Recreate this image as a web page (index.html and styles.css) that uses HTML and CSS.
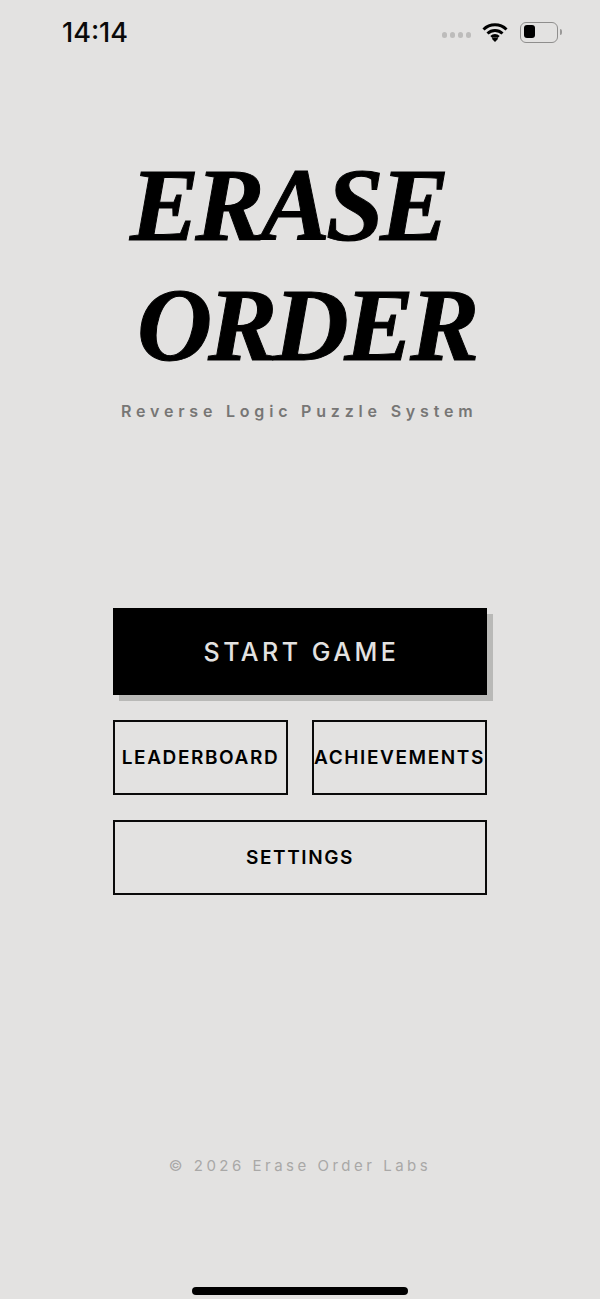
FILE: index.html
```html
<!DOCTYPE html>
<html lang="en">
<head>
    <meta charset="UTF-8">
    <meta name="viewport" content="width=device-width, initial-scale=1.0">
    <title>Erase Order</title>
    <link rel="stylesheet" href="styles.css">
</head>
<body>
    <main class="screen">
        <header class="status-bar">
            <span class="status-time">14:14</span>
            <div class="status-icons">
                <div class="signal-dots">
                    <span></span><span></span><span></span><span></span>
                </div>
                <svg class="icon-wifi" width="26" height="20" viewBox="0 0 26 20">
                    <path d="M1.5 7.5 A16.5 16.5 0 0 1 24.5 7.5 M5.5 11.5 A11 11 0 0 1 20.500 11.500 M9.300 15 A5.500 5.500 0 0 1 16.700 15" fill="none" stroke="#000" stroke-width="3"/>
                    <path d="M13 20 L9.800 16.700 A4.500 4.500 0 0 1 16.200 16.700 Z" fill="#000"/>
                </svg>
                <div class="battery">
                    <div class="battery-body"><span class="battery-level"></span></div>
                    <span class="battery-cap"></span>
                </div>
            </div>
        </header>

        <section class="hero">
            <h1 class="title">
                <span class="title-first">ERASE</span>
                <span class="title-second">ORDER</span>
            </h1>
            <p class="subtitle">Reverse Logic Puzzle System</p>
        </section>

        <nav class="menu">
            <button type="button" class="btn btn-start">START GAME</button>
            <div class="menu-row">
                <button type="button" class="btn btn-line">LEADERBOARD</button>
                <button type="button" class="btn btn-line">ACHIEVEMENTS</button>
            </div>
            <button type="button" class="btn btn-line">SETTINGS</button>
        </nav>

        <footer class="copyright">© 2026 Erase Order Labs</footer>
        <div class="home-bar"></div>
    </main>
</body>
</html>
```

FILE: styles.css
```css
* {
    box-sizing: border-box;
}

html,
body {
    margin: 0;
    padding: 0;
}

body {
    background: #e3e2e1;
    color: #000;
    font-family: "Inter", "Liberation Sans", sans-serif;
}

.screen {
    display: flex;
    flex-direction: column;
    height: 1299px;
    overflow: hidden;
}

.status-bar {
    display: flex;
    justify-content: space-between;
    align-items: center;
    height: 64px;
    padding: 0 38px 0 62px;
}

.status-time {
    font-size: 27px;
    font-weight: 500;
    color: #0a0a0a;
}

.status-icons {
    display: flex;
    align-items: center;
}

.signal-dots {
    display: flex;
    gap: 2.5px;
    margin-right: 11px;
    margin-top: 6px;
}

.signal-dots span {
    width: 5.5px;
    height: 5.5px;
    border-radius: 50%;
    background: #bdbcbb;
}

.icon-wifi {
    margin-right: 12px;
}

.battery {
    display: flex;
    align-items: center;
}

.battery-body {
    width: 38px;
    height: 21px;
    padding: 2.5px;
    border: 1.5px solid #8f8e8d;
    border-radius: 6px;
}

.battery-level {
    display: block;
    width: 11px;
    height: 13px;
    border-radius: 3px;
    background: #000;
}

.battery-cap {
    width: 2px;
    height: 6px;
    margin-left: 2px;
    border-radius: 0 2px 2px 0;
    background: #9a9998;
}

.hero {
    padding-top: 81px;
}

.title {
    margin: 0;
    font-family: "Liberation Serif", "Times New Roman", serif;
    font-size: 104px;
    font-style: italic;
    font-weight: 700;
    line-height: 120px;
    letter-spacing: -4px;
    -webkit-text-stroke: 1px #000;
}

.title span {
    display: block;
}

.title-first {
    margin-left: 130px;
}

.title-second {
    margin-left: 137px;
}

.subtitle {
    margin: 16px 0 0;
    padding-left: 121px;
    font-size: 16px;
    font-weight: 600;
    letter-spacing: 4.8px;
    color: #777675;
}

.menu {
    display: flex;
    flex-direction: column;
    gap: 25px;
    width: 374px;
    margin: 187px 0 0 113px;
}

.menu-row {
    display: flex;
    gap: 24px;
}

.btn {
    display: block;
    padding: 0;
    border: 2px solid #0a0a0a;
    border-radius: 0;
    background: transparent;
    color: #000;
    font-family: inherit;
    font-size: 19px;
    font-weight: 600;
    letter-spacing: 1.6px;
    white-space: nowrap;
}

.btn-line {
    height: 75px;
}

.menu-row .btn-line {
    width: 175px;
}

.btn-start {
    height: 87px;
    padding-left: 3px;
    border-color: #000;
    background: #000;
    box-shadow: 6px 6px 0 #b9b9b7;
    color: #e3e2e1;
    font-size: 25px;
    font-weight: 500;
    letter-spacing: 3.5px;
}

.copyright {
    margin-top: auto;
    text-align: center;
    font-size: 15px;
    letter-spacing: 3.5px;
    color: #a9a8a7;
}

.home-bar {
    width: 216px;
    height: 8px;
    margin: 112px auto 4px;
    border-radius: 4px;
    background: #000;
}
```
